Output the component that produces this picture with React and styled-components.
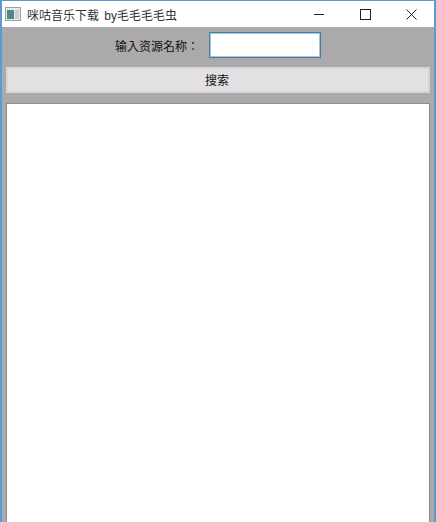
import React from "react";
import styled, { createGlobalStyle } from "styled-components";

const Global = createGlobalStyle`
  html, body {
    margin: 0;
    padding: 0;
  }
  #root {
    height: 522px;
  }
`;

const Win = styled.div`
  width: 436px;
  height: 522px;
  box-sizing: border-box;
  overflow: hidden;
  display: flex;
  flex-direction: column;
  background: #aba9ab;
  border: 2px solid #5b9bd0;
  border-top-width: 1px;
  border-bottom: 0;
  font-family: "Liberation Sans", "Noto Sans CJK SC", sans-serif;
  font-size: 12px;
  color: #111;
`;

const TitleBar = styled.div`
  height: 26px;
  flex: none;
  display: flex;
  align-items: center;
  background: #fff;
`;

const AppIcon = styled.svg`
  width: 16px;
  height: 14px;
  margin-left: 3px;
  flex: none;
`;

const Title = styled.span`
  margin-left: 6px;
  color: #333;
  font-size: 12px;
  word-spacing: 2px;
  flex: 1;
`;

const WinBtn = styled.div`
  width: 46px;
  height: 26px;
  display: flex;
  align-items: center;
  justify-content: center;
`;

const Form = styled.div`
  flex: 1;
  min-height: 0;
  display: flex;
  flex-direction: column;
  padding: 5px 0 0 4px;
`;

const NameRow = styled.div`
  height: 26px;
  flex: none;
  display: flex;
  align-items: center;
`;

const Label = styled.label`
  margin-left: 109px;
  width: 94px;
  font-family: "Liberation Sans", "Noto Sans CJK TC", sans-serif;
  font-size: 12px;
  white-space: nowrap;
`;

const NameInput = styled.input`
  width: 112px;
  height: 26px;
  box-sizing: border-box;
  border: 1px solid #3f7fa8;
  box-shadow: inset 0 0 0 1px #a9c6d8;
  background: #fff;
  padding: 0;
  outline: 0;
`;

const SearchBtn = styled.button`
  margin-top: 9px;
  width: 424px;
  height: 26px;
  flex: none;
  box-sizing: border-box;
  border: 2px solid #d6d4d6;
  background: #e2e0e2;
  color: #111;
  font: inherit;
  padding: 0 2px 2px 0;
`;

const ResultList = styled.div`
  margin-top: 10px;
  width: 424px;
  flex: 1;
  box-sizing: border-box;
  background: #fff;
  border: 1px solid #8f8d8f;
  border-bottom: 0;
`;

export default function App() {
  return (
    <>
      <Global />
      <Win>
        <TitleBar>
          <AppIcon viewBox="0 0 16 14">
            <rect x="0.5" y="0.5" width="15" height="13" fill="#e8eaec" stroke="#9aa0a6" />
            <rect x="2" y="3" width="7" height="9" fill="#4d8a86" />
            <rect x="10" y="3" width="4" height="9" fill="#c9ced2" />
          </AppIcon>
          <Title>咪咕音乐下载 by毛毛毛毛虫</Title>
          <WinBtn>
            <svg width="10" height="10" viewBox="0 0 10 10">
              <path d="M0 5.5H10" stroke="#222" strokeWidth="1" />
            </svg>
          </WinBtn>
          <WinBtn>
            <svg width="11" height="11" viewBox="0 0 11 11">
              <rect x="0.5" y="0.5" width="10" height="10" fill="none" stroke="#222" strokeWidth="1" />
            </svg>
          </WinBtn>
          <WinBtn>
            <svg width="11" height="11" viewBox="0 0 11 11">
              <path d="M0.5 0.5L10.5 10.5M10.5 0.5L0.5 10.5" stroke="#222" strokeWidth="1" />
            </svg>
          </WinBtn>
        </TitleBar>
        <Form>
          <NameRow>
            <Label>输入资源名称：</Label>
            <NameInput />
          </NameRow>
          <SearchBtn>搜索</SearchBtn>
          <ResultList />
        </Form>
      </Win>
    </>
  );
}
